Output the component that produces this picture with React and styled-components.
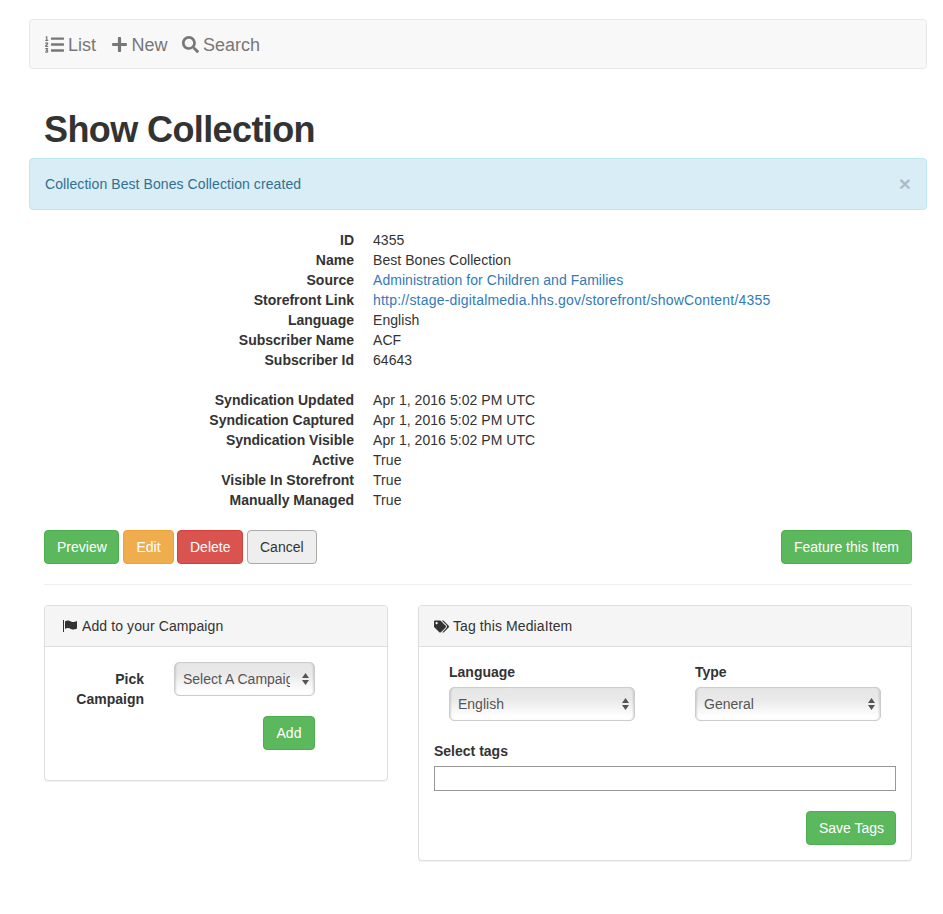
import React from 'react';
import styled, {createGlobalStyle} from 'styled-components';
import {FaListOl, FaPlus, FaSearch, FaTags} from 'react-icons/fa';

const GlobalStyle = createGlobalStyle`
  * { box-sizing: border-box; }
  body {
    margin: 0;
    background: #fff;
    color: #333;
    font-family: "Liberation Sans", Arial, sans-serif;
    font-size: 14px;
    line-height: 20px;
  }
`;

const Page = styled.div`
  padding: 19px 16px 53px 29px;
`;

const Navbar = styled.nav`
  display: flex;
  align-items: center;
  gap: 14.5px;
  height: 50px;
  padding: 1px 15px 0;
  background: #f8f8f8;
  border: 1px solid #e7e7e7;
  border-radius: 4px;
`;

const NavLink = styled.a`
  display: flex;
  align-items: center;
  gap: 4px;
  color: #777;
  font-size: 18px;
  svg { font-size: ${props => props.$icon}px; }
`;

const Title = styled.h1`
  margin: 41px 0 8px 15px;
  font-size: 36px;
  line-height: 40px;
  font-weight: 700;
  letter-spacing: -0.6px;
`;

const Alert = styled.div`
  display: flex;
  justify-content: space-between;
  align-items: center;
  height: 52px;
  padding: 0 15px;
  background: #d9edf7;
  border: 1px solid #bce8f1;
  border-radius: 4px;
  color: #31708f;
  letter-spacing: 0.08px;
`;

const Close = styled.span`
  color: #000;
  opacity: 0.2;
  font-size: 21px;
  font-weight: 700;
`;

const Content = styled.div`
  padding: 20px 15px 0;
`;

const Details = styled.dl`
  display: grid;
  grid-template-columns: 310px 1fr;
  column-gap: 19px;
  margin: 0 0 20px;
`;

const Term = styled.dt`
  font-weight: 700;
  text-align: right;
`;

const Value = styled.dd`
  margin: 0;
  letter-spacing: 0.05px;
`;

const Spacer = styled.div`
  grid-column: 1 / -1;
  height: 20px;
`;

const Link = styled.a`
  color: #337ab7;
  letter-spacing: ${props => props.$spread ? '0.2px' : '0.05px'};
`;

const Actions = styled.div`
  display: flex;
  gap: 4px;
  padding-bottom: 20px;
  border-bottom: 1px solid #eee;
`;

const colors = {
  success: ['#5cb85c', '#4cae4c'],
  warning: ['#f0ad4e', '#eea236'],
  danger: ['#d9534f', '#d43f3a'],
};

const Button = styled.button`
  width: ${props => props.$width ? `${props.$width}px` : 'auto'};
  height: 34px;
  padding: 0 12px;
  font: inherit;
  white-space: nowrap;
  color: #fff;
  background: ${props => colors[props.$kind][0]};
  border: 1px solid ${props => colors[props.$kind][1]};
  border-radius: 4px;
  ${props => props.$push ? 'margin-left: auto;' : ''}
`;

const EditButton = styled(Button)`
  margin-right: -1px;
`;

const CancelButton = styled.button`
  height: 34px;
  padding: 0 12px;
  font: inherit;
  color: #333;
  background: #eee;
  border: 1px solid #aaa;
  border-radius: 4px;
`;

const Panels = styled.div`
  display: grid;
  grid-template-columns: 344px 494px;
  justify-content: space-between;
  align-items: start;
  margin-top: 20px;
`;

const Panel = styled.section`
  height: ${props => props.$height}px;
  background: #fff;
  border: 1px solid #ddd;
  border-radius: 4px;
  box-shadow: 0 1px 1px rgba(0,0,0,.05);
`;

const PanelHeading = styled.header`
  display: flex;
  align-items: center;
  gap: ${props => props.$gap}px;
  height: 41px;
  padding: 0 15px 0 ${props => props.$indent}px;
  background: #f5f5f5;
  border-bottom: 1px solid #ddd;
  border-radius: 3px 3px 0 0;
  letter-spacing: 0.1px;
`;

const CampaignBody = styled.div`
  display: grid;
  grid-template-columns: 84px 141px;
  column-gap: 30px;
  row-gap: 20px;
  padding: 15px 0 0 15px;
`;

const FieldLabel = styled.label`
  grid-row: 1 / span 2;
  font-weight: 700;
  text-align: right;
  padding-top: 7px;
`;

const SelectWrap = styled.div`
  position: relative;
  width: ${props => props.$width}px;
  height: 34px;
  svg {
    position: absolute;
    right: 6px;
    top: 11px;
    pointer-events: none;
  }
`;

const Select = styled.select`
  appearance: none;
  width: 100%;
  height: 100%;
  padding: 0 24px 0 8px;
  font: inherit;
  color: #555;
  background: linear-gradient(#e6e6e6, #e9e9e9 35%, #fff 90%);
  border: 1px solid #ccc;
  border-radius: 5px;
  box-shadow: inset 2px 0 2px -1px rgba(0,0,0,.14), inset -2px 0 2px -1px rgba(0,0,0,.14);
`;

const AddButton = styled(Button)`
  grid-column: 2;
  justify-self: end;
`;

const TagBody = styled.div`
  padding: 15px;
`;

const TagSelects = styled.div`
  display: grid;
  grid-template-columns: 186px 186px;
  column-gap: 60px;
  padding-left: 15px;
`;

const StackLabel = styled.label`
  display: block;
  font-weight: 700;
  margin-bottom: 5px;
`;

const TagsField = styled.div`
  margin-top: 20px;
`;

const TagsInput = styled.input`
  display: block;
  width: 100%;
  height: 25px;
  border: 1px solid #999;
  background: #fff;
`;

const TagFooter = styled.div`
  display: flex;
  justify-content: flex-end;
  margin-top: 20px;
`;

const Arrows = () => (
  <svg width="7" height="12" viewBox="0 0 7 12">
    <path d="M3.5 0 L7 5 H0 Z M3.5 12 L0 7 H7 Z" fill="#555" />
  </svg>
);

const FlagIcon = () => (
  <svg width="14" height="12" viewBox="0 0 14 12">
    <path d="M0 0 H1 V12 H0 Z" fill="#333" />
    <path d="M2 1.5 C4 0 6 0.5 8 1.5 C10 2.5 12 2 14 1 V8.5 C12 9.5 10 10 8 9 C6 8 4 7.5 2 9 Z" fill="#333" />
  </svg>
);

const App = () => (
  <Page>
    <GlobalStyle />
    <Navbar>
      <NavLink $icon={19}><FaListOl /> List</NavLink>
      <NavLink $icon={17}><FaPlus /> New</NavLink>
      <NavLink $icon={17}><FaSearch /> Search</NavLink>
    </Navbar>
    <Title>Show Collection</Title>
    <Alert>
      Collection Best Bones Collection created
      <Close>×</Close>
    </Alert>
    <Content>
      <Details>
        <Term>ID</Term><Value>4355</Value>
        <Term>Name</Term><Value>Best Bones Collection</Value>
        <Term>Source</Term><Value><Link>Administration for Children and Families</Link></Value>
        <Term>Storefront Link</Term><Value><Link $spread>http://stage-digitalmedia.hhs.gov/storefront/showContent/4355</Link></Value>
        <Term>Language</Term><Value>English</Value>
        <Term>Subscriber Name</Term><Value>ACF</Value>
        <Term>Subscriber Id</Term><Value>64643</Value>
        <Spacer />
        <Term>Syndication Updated</Term><Value>Apr 1, 2016 5:02 PM UTC</Value>
        <Term>Syndication Captured</Term><Value>Apr 1, 2016 5:02 PM UTC</Value>
        <Term>Syndication Visible</Term><Value>Apr 1, 2016 5:02 PM UTC</Value>
        <Term>Active</Term><Value>True</Value>
        <Term>Visible In Storefront</Term><Value>True</Value>
        <Term>Manually Managed</Term><Value>True</Value>
      </Details>
      <Actions>
        <Button $kind="success" $width={75}>Preview</Button>
        <EditButton $kind="warning" $width={51}>Edit</EditButton>
        <Button $kind="danger" $width={66}>Delete</Button>
        <CancelButton>Cancel</CancelButton>
        <Button $kind="success" $push>Feature this Item</Button>
      </Actions>
      <Panels>
        <Panel $height={176}>
          <PanelHeading $indent={18} $gap={5}><FlagIcon /> Add to your Campaign</PanelHeading>
          <CampaignBody>
            <FieldLabel>Pick Campaign</FieldLabel>
            <SelectWrap $width={141}>
              <Select><option>Select A Campaign</option></Select>
              <Arrows />
            </SelectWrap>
            <AddButton $kind="success" $width={52}>Add</AddButton>
          </CampaignBody>
        </Panel>
        <Panel $height={256}>
          <PanelHeading $indent={15} $gap={4}><FaTags size={15} /> Tag this MediaItem</PanelHeading>
          <TagBody>
            <TagSelects>
              <div>
                <StackLabel>Language</StackLabel>
                <SelectWrap $width={186}>
                  <Select><option>English</option></Select>
                  <Arrows />
                </SelectWrap>
              </div>
              <div>
                <StackLabel>Type</StackLabel>
                <SelectWrap $width={186}>
                  <Select><option>General</option></Select>
                  <Arrows />
                </SelectWrap>
              </div>
            </TagSelects>
            <TagsField>
              <StackLabel>Select tags</StackLabel>
              <TagsInput />
            </TagsField>
            <TagFooter>
              <Button $kind="success" $width={90}>Save Tags</Button>
            </TagFooter>
          </TagBody>
        </Panel>
      </Panels>
    </Content>
  </Page>
);

export default App;
